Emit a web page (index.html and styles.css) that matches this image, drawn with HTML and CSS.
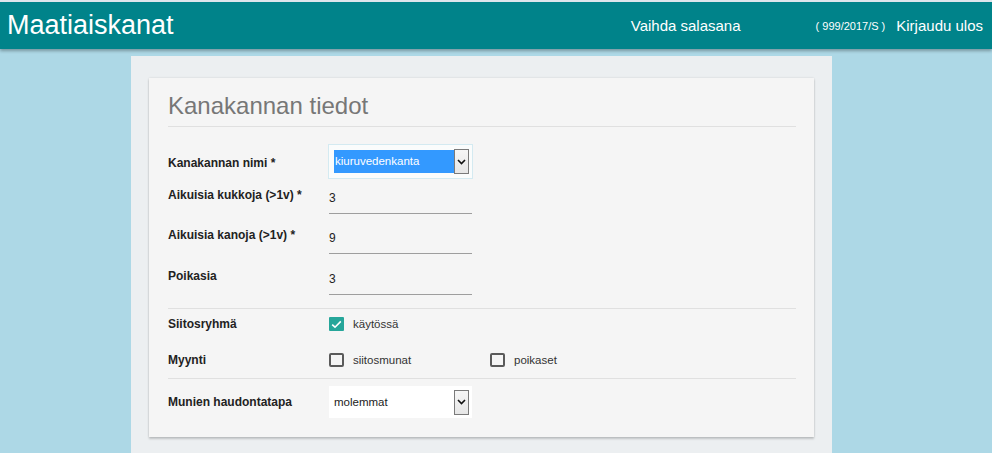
FILE: index.html
```html
<!DOCTYPE html>
<html lang="fi">
<head>
<meta charset="utf-8">
<title>Maatiaiskanat</title>
<link rel="stylesheet" href="styles.css">
</head>
<body>
<header class="topbar">
  <div class="brand">Maatiaiskanat</div>
  <nav class="nav">
    <a class="nav-link nav-pw" href="#">Vaihda salasana</a>
    <span class="nav-user">( 999/2017/S )</span>
    <a class="nav-link" href="#">Kirjaudu ulos</a>
  </nav>
</header>
<main class="page">
  <section class="card">
    <h5 class="card-title">Kanakannan tiedot</h5>

    <div class="row row-select-first">
      <label class="lbl">Kanakannan nimi *</label>
      <div class="select select-focus">
        <span class="select-text select-text-hl">kiuruvedenkanta</span>
        <span class="select-btn"><svg width="9" height="6" viewBox="0 0 9 6"><path d="M1 1 L4.5 4.5 L8 1" fill="none" stroke="#111" stroke-width="1.6"/></svg></span>
      </div>
    </div>

    <div class="row row-input row-first-input">
      <label class="lbl">Aikuisia kukkoja (&gt;1v) *</label>
      <div class="input">3</div>
    </div>
    <div class="row row-input">
      <label class="lbl">Aikuisia kanoja (&gt;1v) *</label>
      <div class="input">9</div>
    </div>
    <div class="row row-input row-last-input">
      <label class="lbl">Poikasia</label>
      <div class="input">3</div>
    </div>

    <div class="divider divider-a"></div>

    <div class="row row-check row-check-first">
      <label class="lbl">Siitosryhmä</label>
      <div class="opt">
        <span class="cb cb-on"><svg width="11" height="9" viewBox="0 0 11 9"><path d="M1.2 4.6 L4 7.2 L9.8 1.4" fill="none" stroke="#fff" stroke-width="1.6"/></svg></span>
        <span class="opt-text">käytössä</span>
      </div>
    </div>
    <div class="row row-check">
      <label class="lbl">Myynti</label>
      <div class="opt">
        <span class="cb"></span>
        <span class="opt-text">siitosmunat</span>
      </div>
      <div class="opt">
        <span class="cb"></span>
        <span class="opt-text">poikaset</span>
      </div>
    </div>

    <div class="divider divider-b"></div>

    <div class="row row-select-last">
      <label class="lbl">Munien haudontatapa</label>
      <div class="select">
        <span class="select-text">molemmat</span>
        <span class="select-btn"><svg width="9" height="6" viewBox="0 0 9 6"><path d="M1 1 L4.5 4.5 L8 1" fill="none" stroke="#111" stroke-width="1.6"/></svg></span>
      </div>
    </div>
  </section>
</main>
</body>
</html>
```

FILE: styles.css
```css
html, body {
  margin: 0;
  padding: 0;
}
body {
  background: #add8e6;
  font-family: "Liberation Sans", Arial, sans-serif;
  color: #222;
  height: 453px;
  overflow: hidden;
}

.topbar {
  border-top: 2px solid #dde6ec;
  height: 47px;
  background: #00838a;
  display: flex;
  align-items: center;
  justify-content: space-between;
  box-shadow: 0 2px 3px rgba(0, 0, 0, 0.3);
  position: relative;
  z-index: 2;
}
.brand {
  color: #fff;
  font-size: 27px;
  padding-left: 7px;
  line-height: 32px;
  margin-top: -1px;
}
.nav {
  display: flex;
  align-items: center;
  padding-right: 9px;
}
.nav-link {
  color: #fff;
  text-decoration: none;
  font-size: 15px;
}
.nav-pw {
  margin-right: 75px;
}
.nav-user {
  color: #fff;
  font-size: 11px;
  margin-right: 11px;
}

.page {
  width: 665px;
  margin: 7px 0 0 131px;
  padding: 22px 18px 0;
  background: #eceff1;
  height: 375px;
}

.card {
  background: #f5f5f5;
  padding: 14px 18px 19px 19px;
  box-shadow: 0 2px 2px rgba(0, 0, 0, 0.18), 0 0 2px rgba(0, 0, 0, 0.12);
}
.card-title {
  margin: 0;
  font-size: 24px;
  line-height: 28px;
  font-weight: normal;
  color: #777;
  padding-bottom: 6px;
  border-bottom: 1px solid #e0e0e0;
}

.row {
  display: flex;
  align-items: center;
}
.lbl {
  width: 161px;
  flex: none;
  font-size: 12px;
  font-weight: bold;
  color: #222;
  line-height: 16px;
}

.row-select-first {
  margin-top: 17px;
  height: 35px;
}
.row-select-first .lbl {
  padding-top: 3px;
}

.select {
  width: 143px;
  height: 32px;
  box-sizing: border-box;
  display: flex;
  align-items: center;
  padding: 0 3px 0 5px;
  background: #fff;
}
.select-focus {
  width: 145px;
  height: 35px;
  margin-left: -1px;
  border: 1px solid #d4eaf1;
  background: #fafcfc;
  padding: 0 3px 0 5px;
}
.select-text {
  flex: 1;
  font-size: 11.5px;
  color: #222;
  line-height: 23px;
  height: 23px;
}
.select-text-hl {
  background: #3399ff;
  color: #fff;
  padding-left: 1px;
}
.select-btn {
  width: 15px;
  height: 25px;
  box-sizing: border-box;
  border: 1px solid #7a7a7a;
  background: linear-gradient(#f6f6f6, #e6e6e6);
  display: flex;
  align-items: center;
  justify-content: center;
  margin-left: -1px;
}

.row-input {
  align-items: flex-start;
  margin-top: 9px;
}
.row-first-input {
  margin-top: 4px;
}
.row-last-input {
  margin-top: 10px;
}
.row-input .lbl {
  padding-top: 4px;
}
.input {
  width: 143px;
  height: 30px;
  border-bottom: 1px solid #9e9e9e;
  font-size: 12px;
  line-height: 30px;
  color: #222;
}

.divider {
  border-top: 1px solid #e0e0e0;
}
.divider-a {
  margin-top: 13px;
}
.divider-b {
  margin-top: 8px;
}

.row-check {
  height: 20px;
  margin-top: 16px;
}
.row-check-first {
  margin-top: 5px;
}
.opt {
  width: 161px;
  display: flex;
  align-items: center;
}
.cb {
  width: 15px;
  height: 14px;
  box-sizing: border-box;
  border: 2px solid #5a5a5a;
  border-radius: 2px;
  flex: none;
  display: flex;
  align-items: center;
  justify-content: center;
}
.cb-on {
  border: none;
  background: #26a69a;
  border-radius: 1px;
}
.opt-text {
  margin-left: 9px;
  font-size: 11.5px;
  color: #333;
}

.row-select-last {
  margin-top: 7px;
}
```
